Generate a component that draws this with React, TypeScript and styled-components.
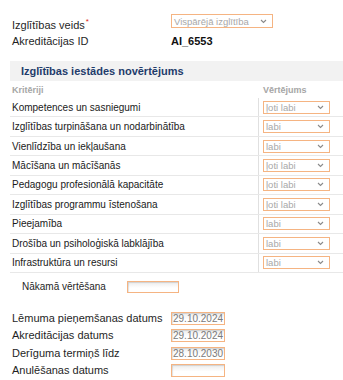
import styled, { createGlobalStyle } from "styled-components";

const GlobalStyle = createGlobalStyle`
  body {
    margin: 0;
    background: #ffffff;
    font-family: "Liberation Sans", Arial, sans-serif;
    color: #1f1f1f;
  }
`;

const Page = styled.div`
  padding-top: 14px;
  width: 343px;
  overflow: hidden;
`;

const InfoRow = styled.div<{ $h: number }>`
  display: flex;
  align-items: flex-start;
  height: ${(p) => p.$h}px;
  padding-left: 12px;
`;

const Label = styled.div<{ $top?: number; $w?: number; $size?: number }>`
  width: ${(p) => p.$w ?? 159}px;
  flex-shrink: 0;
  margin-top: ${(p) => p.$top ?? 0}px;
  font-size: ${(p) => p.$size ?? 11}px;
  line-height: 13px;
  color: #1f1f1f;
  white-space: nowrap;
`;

const Required = styled.sup`
  color: #e02020;
  font-size: 8px;
  line-height: 0;
  margin-left: 1px;
  vertical-align: 5px;
`;

const Value = styled.div`
  font-size: 11px;
  line-height: 13px;
  font-weight: bold;
  color: #111;
`;

const SelectBox = styled.div<{ $w: number; $h: number }>`
  box-sizing: border-box;
  width: ${(p) => p.$w}px;
  height: ${(p) => p.$h}px;
  border: 1px solid #f5b482;
  background: #ffffff;
  display: flex;
  align-items: center;
  justify-content: space-between;
  padding: 0 5px 0 2px;
  font-size: 9.5px;
  color: #a8a8a8;
  white-space: nowrap;
`;

const Section = styled.div`
  margin: 13.5px 0 0 10px;
`;

const Band = styled.div`
  height: 20px;
  background: #f2f2f2;
  padding-left: 11px;
  font-size: 11px;
  line-height: 20px;
  font-weight: bold;
  color: #1f3c6b;
`;

const HeadRow = styled.div`
  display: flex;
  height: 17px;
  align-items: center;
  font-size: 9px;
  font-weight: bold;
  color: #a6a6a6;
`;

const Row = styled.div`
  display: flex;
  box-sizing: border-box;
  height: 19.45px;
  border-bottom: 1px solid #e8e8e8;
`;

const CritCell = styled.div`
  width: 248px;
  box-sizing: border-box;
  padding-left: 2px;
  font-size: 10px;
  display: flex;
  align-items: center;
  color: #1a1a1a;
  white-space: nowrap;
`;

const HeadCell = styled.div<{ $w?: number }>`
  width: ${(p) => (p.$w ? `${p.$w}px` : "auto")};
  box-sizing: border-box;
  padding-left: ${(p) => (p.$w ? 2 : 5)}px;
`;

const ValueCell = styled.div`
  flex: 1;
  border-left: 1px solid #e0e0e0;
  padding-left: 4px;
  display: flex;
  align-items: center;
`;

const NextRow = styled.div`
  display: flex;
  align-items: center;
  height: 12px;
  margin-top: 8px;
  padding-left: 22px;
`;

const DateList = styled.div`
  margin-top: 17px;
`;

const DateRow = styled.div`
  display: flex;
  align-items: center;
  height: 17.3px;
  padding-left: 12px;
`;

const Field = styled.div<{ $w: number; $h: number }>`
  box-sizing: border-box;
  width: ${(p) => p.$w}px;
  height: ${(p) => p.$h}px;
  border: 1px solid #f5b482;
  background: linear-gradient(#ececec, #ffffff 60%);
  box-shadow: inset 1px 1px 1px rgba(0, 0, 0, 0.12);
  padding-left: 1px;
  font-size: 10px;
  line-height: ${(p) => p.$h - 2}px;
  color: #7a7a7a;
  flex-shrink: 0;
`;

const Chevron = () => (
  <svg width="7" height="5" viewBox="0 0 7 5">
    <path d="M1 1l2.5 2.5L6 1" fill="none" stroke="#8a8a8a" strokeWidth="1.1" />
  </svg>
);

const Select = ({ value, w, h }: { value: string; w: number; h: number }) => (
  <SelectBox $w={w} $h={h}>
    <span>{value}</span>
    <Chevron />
  </SelectBox>
);

const criteria: [string, string][] = [
  ["Kompetences un sasniegumi", "ļoti labi"],
  ["Izglītības turpināšana un nodarbinātība", "labi"],
  ["Vienlīdzība un iekļaušana", "labi"],
  ["Mācīšana un mācīšanās", "ļoti labi"],
  ["Pedagogu profesionālā kapacitāte", "ļoti labi"],
  ["Izglītības programmu īstenošana", "ļoti labi"],
  ["Pieejamība", "labi"],
  ["Drošība un psiholoģiskā labklājība", "labi"],
  ["Infrastruktūra un resursi", "labi"],
];

const dates: [string, string][] = [
  ["Lēmuma pieņemšanas datums", "29.10.2024"],
  ["Akreditācijas datums", "29.10.2024"],
  ["Derīguma termiņš līdz", "28.10.2030"],
  ["Anulēšanas datums", ""],
];

export default function App() {
  return (
    <>
      <GlobalStyle />
      <Page>
        <InfoRow $h={20.5}>
          <Label $top={5}>
            Izglītības veids<Required>*</Required>
          </Label>
          <Select value="Vispārējā izglītība" w={102} h={14} />
        </InfoRow>
        <InfoRow $h={13}>
          <Label>Akreditācijas ID</Label>
          <Value>AI_6553</Value>
        </InfoRow>

        <Section>
          <Band>Izglītības iestādes novērtējums</Band>
          <HeadRow>
            <HeadCell $w={248}>Kritēriji</HeadCell>
            <HeadCell>Vērtējums</HeadCell>
          </HeadRow>
          {criteria.map(([name, grade]) => (
            <Row key={name}>
              <CritCell>{name}</CritCell>
              <ValueCell>
                <Select value={grade} w={67} h={13} />
              </ValueCell>
            </Row>
          ))}
        </Section>

        <NextRow>
          <Label $w={105} $size={10}>
            Nākamā vērtēšana
          </Label>
          <Field $w={52} $h={12} />
        </NextRow>

        <DateList>
          {dates.map(([label, value]) => (
            <DateRow key={label}>
              <Label>{label}</Label>
              <Field $w={54} $h={13}>
                {value}
              </Field>
            </DateRow>
          ))}
          <DateRow>
            <Label />
            <Field $w={120} $h={13} />
          </DateRow>
        </DateList>
      </Page>
    </>
  );
}
